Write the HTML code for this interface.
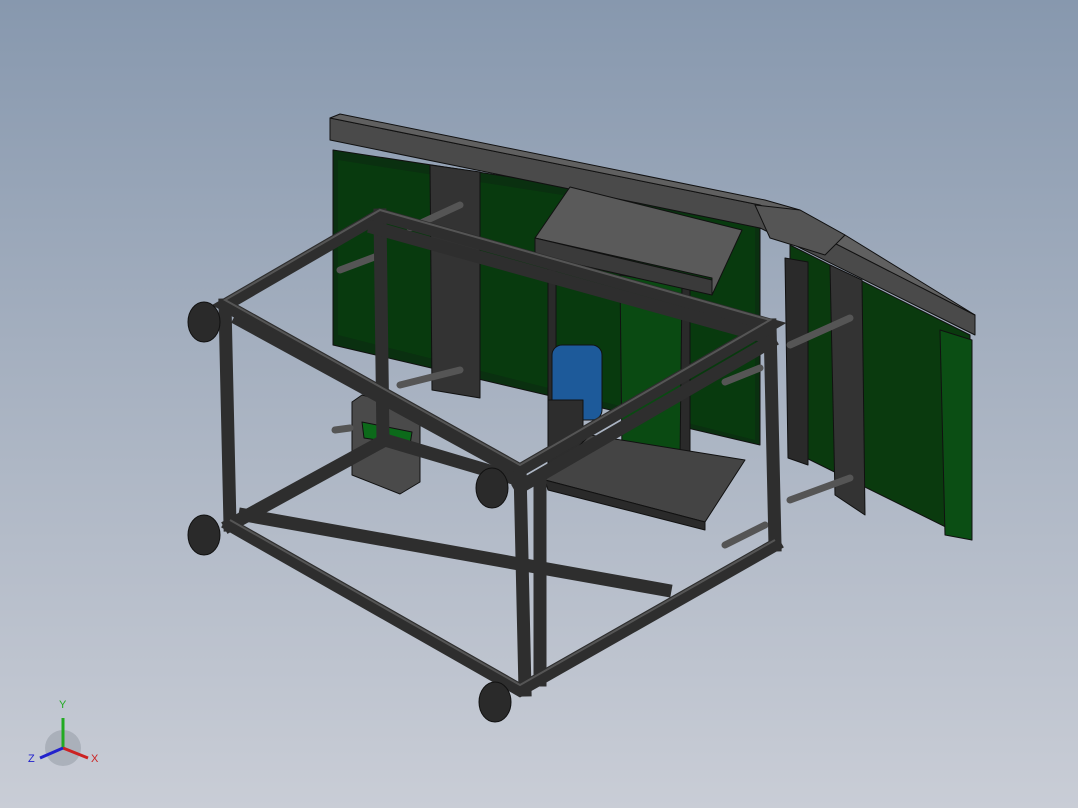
<!DOCTYPE html>
<html><head><meta charset="utf-8"><style>
html,body{margin:0;padding:0;width:1078px;height:808px;overflow:hidden}
body{background:linear-gradient(#8798ae 0%,#a9b3c2 50%,#c9cdd6 100%)}
</style></head><body>
<svg width="1078" height="808" viewBox="0 0 1078 808" xmlns="http://www.w3.org/2000/svg">
<g stroke="#111" stroke-width="1" stroke-linejoin="round">
<polygon points="333,150 760,215 760,445 333,345" fill="#0a3010"/>
<polygon points="338,160 755,225 755,440 338,335" fill="#083a0e" stroke="none"/>
<polygon points="790,245 970,335 972,540 790,450" fill="#0a3a0e"/>
<polygon points="940,330 972,340 972,540 945,535" fill="#0b4e14"/>
<polygon points="330,118 760,205 975,315 975,335 760,228 330,140" fill="#4a4a4a"/>
<polygon points="330,118 340,114 765,200 800,210 845,235 975,315 760,205" fill="#606060"/>
<polygon points="755,205 800,210 845,235 825,255 770,238" fill="#555"/>
<polygon points="430,165 480,172 480,398 432,390" fill="#333"/>
<polygon points="830,265 862,280 865,515 835,495" fill="#333"/>
<polygon points="785,258 808,262 808,465 788,458" fill="#2a2a2a"/>
<rect x="548" y="255" width="8" height="200" fill="#2a2a2a"/>
<rect x="680" y="285" width="10" height="190" fill="#2a2a2a"/>
<polygon points="620,275 682,285 680,460 622,455" fill="#0a4a12"/>
<polygon points="535,238 570,187 742,230 712,295 712,278" fill="#5a5a5a"/>
<polygon points="535,238 712,280 712,295 535,255" fill="#3a3a3a"/>
<rect x="552" y="345" width="50" height="75" rx="10" fill="#1d5a9a"/>
<rect x="548" y="400" width="35" height="65" fill="#2d2d2d"/>
<polygon points="545,480 590,435 745,460 705,522" fill="#444"/>
<polygon points="545,480 705,522 705,530 548,490" fill="#2a2a2a"/>
<polygon points="352,402 362,395 420,410 420,482 400,494 352,475" fill="#4a4a4a"/>
<polygon points="362,422 412,432 410,445 364,438" fill="#0c6a1a"/>
</g>
<g stroke="#555" stroke-width="7" stroke-linecap="round">
<line x1="410" y1="228" x2="460" y2="205"/><line x1="340" y1="270" x2="380" y2="255"/>
<line x1="400" y1="385" x2="460" y2="370"/><line x1="335" y1="430" x2="350" y2="428"/>
<line x1="790" y1="345" x2="850" y2="318"/><line x1="725" y1="382" x2="760" y2="368"/>
<line x1="790" y1="500" x2="850" y2="478"/><line x1="725" y1="545" x2="765" y2="525"/>
</g>
<g stroke="#2e2e2e" stroke-width="13" stroke-linecap="square" fill="none">
<path d="M225,305 L380,215 L770,325 L520,470 Z"/>
<path d="M230,525 L520,690 L775,545"/>
<path d="M230,525 L385,440"/>
<path d="M245,515 L665,590"/>
<path d="M385,440 L520,480"/>
<path d="M225,305 L230,525 M520,470 L525,690 M770,325 L775,545 M380,215 L383,440"/>
<path d="M240,320 L505,465"/>
<path d="M375,228 L760,335"/>
<path d="M520,487 L770,342"/>
<path d="M540,480 L540,680"/>
</g>
<g stroke="#555" stroke-width="2" fill="none">
<path d="M225,300 L380,210 L770,320 L520,465 Z"/>
<path d="M230,520 L520,685 L775,540"/>
</g>
<g fill="#2a2a2a" stroke="#111">
<ellipse cx="204" cy="322" rx="16" ry="20"/><ellipse cx="204" cy="535" rx="16" ry="20"/>
<ellipse cx="492" cy="488" rx="16" ry="20"/><ellipse cx="495" cy="702" rx="16" ry="20"/>
</g>
<g font-family="Liberation Sans, sans-serif" font-size="11">
<circle cx="63" cy="748" r="18" fill="#9aa0aa" opacity="0.6"/>
<line x1="63" y1="748" x2="63" y2="718" stroke="#2a2" stroke-width="3"/>
<line x1="63" y1="748" x2="88" y2="758" stroke="#c22" stroke-width="3"/>
<line x1="63" y1="748" x2="40" y2="758" stroke="#22c" stroke-width="3"/>
<text x="59" y="708" fill="#2a2">Y</text>
<text x="91" y="762" fill="#c22">X</text>
<text x="28" y="762" fill="#22c">Z</text>
</g>
</svg>
</body></html>
